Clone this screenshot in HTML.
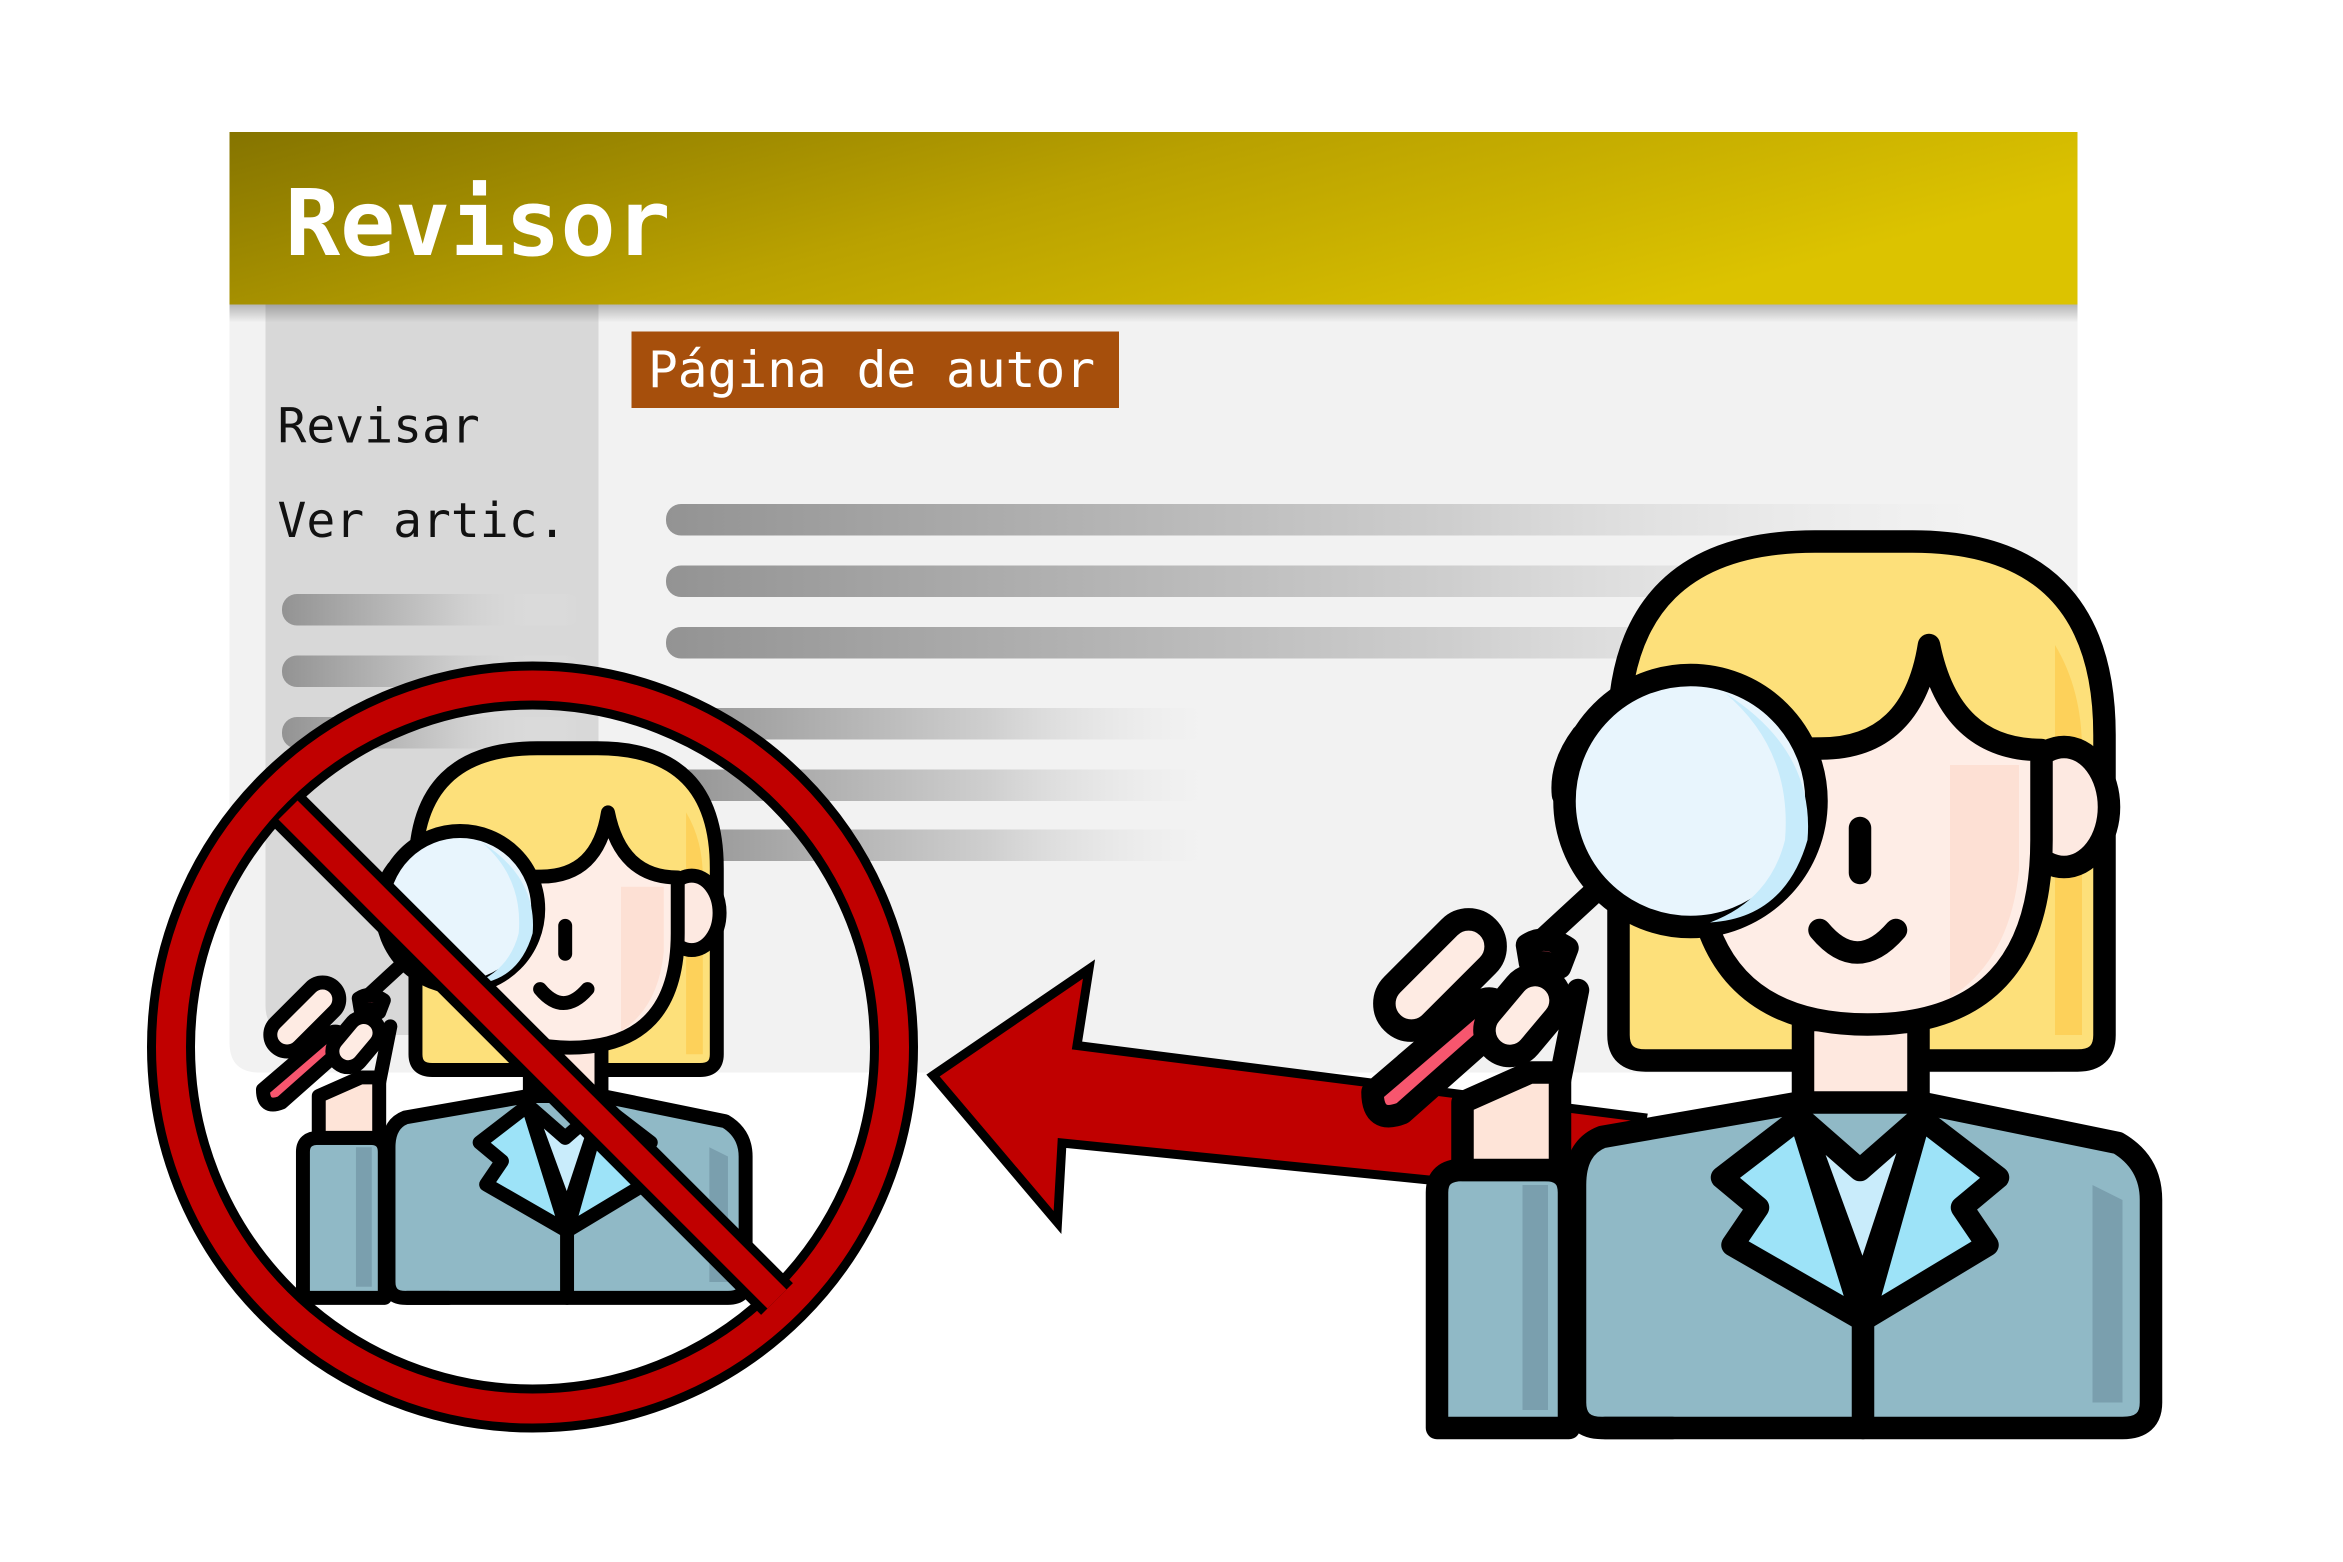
<!DOCTYPE html>
<html><head><meta charset="utf-8"><style>html,body{margin:0;padding:0;background:#fff}svg{display:block}</style></head>
<body>
<svg width="2343" height="1562" viewBox="0 0 1562 1041.333" xmlns="http://www.w3.org/2000/svg">
<defs>
<linearGradient id="hd" x1="0" y1="0" x2="1" y2="0.35">
<stop offset="0" stop-color="#857400"/><stop offset="0.5" stop-color="#b9a100"/><stop offset="1" stop-color="#dcc300"/></linearGradient>
<linearGradient id="bar" x1="0" y1="0" x2="1" y2="0">
<stop offset="0" stop-color="#939393"/><stop offset="0.6" stop-color="#cfcfcf"/><stop offset="1" stop-color="#e6e6e6" stop-opacity="0"/></linearGradient>
<linearGradient id="sh" x1="0" y1="0" x2="0" y2="1"><stop offset="0" stop-color="#000" stop-opacity="0.25"/><stop offset="1" stop-color="#000" stop-opacity="0"/></linearGradient>
<g id="woman" stroke="#000" stroke-width="15" stroke-linejoin="round" stroke-linecap="round">
  <path d="M1079,690 L1079,490 Q1079,361 1210,361 L1275,361 Q1403,361 1403,490 L1403,690 Q1403,707 1385,707 L1097,707 Q1079,707 1079,690 Z" fill="#fde07a"/>
  <path d="M1370,430 Q1388,460 1388,500 L1388,690 L1370,690 Z" fill="#fdd15a" stroke="none"/>
  <rect x="1202" y="680" width="77" height="65" fill="#fee8df"/>
  <ellipse cx="1376" cy="538" rx="30" ry="40" fill="#fde9e1"/>
  <path d="M1130,500 L1130,560 Q1130,683 1245,683 Q1361,683 1361,560 L1361,500 Q1300,500 1286,430 Q1275,499 1214,499 Z" fill="#feede6"/>
  <path d="M1330,510 L1346,510 L1346,580 Q1340,640 1300,665 L1300,510 Z" fill="#fde0d4" stroke="none"/>
  <line x1="1240" y1="552" x2="1240" y2="582"/>
  <path d="M1213,620 Q1238,650 1264,620" fill="none"/>
  <path d="M1068,758 L1200,735 L1280,735 L1412,762 Q1434,775 1434,800 L1434,935 Q1434,952 1415,952 L1068,952 Q1050,952 1050,935 L1050,790 Q1050,765 1068,758 Z" fill="#90b9c6"/>
  <path d="M1395,790 L1415,800 L1415,935 L1395,935 Z" fill="#7a9fae" stroke="none"/>
  <path d="M958,952 L958,795 Q958,780 975,780 L1030,780 Q1046,780 1046,795 L1046,952 Z" fill="#90b9c6"/>
  <path d="M1015,790 L1032,790 L1032,940 L1015,940 Z" fill="#7a9fae" stroke="none"/>
  <line x1="1070" y1="952" x2="1115" y2="952"/>
  <path d="M1200,745 L1240,780 L1280,745 L1242,860 Z" fill="#c9ecfb"/>
  <path d="M1200,745 L1148,785 L1172,805 L1155,830 L1242,880 Z" fill="#9de3f8"/>
  <path d="M1280,745 L1332,785 L1308,805 L1325,830 L1242,880 Z" fill="#9de3f8"/>
  <line x1="1242" y1="880" x2="1242" y2="952"/>
  <path d="M975,780 L975,735 L1020,715 L1040,715 L1040,780 Z" fill="#fee4d8"/>
  <path d="M1040,720 L1052,660" fill="none"/>
  <line x1="1030" y1="625" x2="1068" y2="590"/>
  <path d="M915,728 L985,668 Q1000,660 1005,680 L935,742 Q915,750 915,728 Z" fill="#f7566e"/>
  <rect x="915" y="632" width="90" height="36" rx="18" transform="rotate(-45 960 650)" fill="#feebe3"/>
  <rect x="985" y="660" width="60" height="34" rx="17" transform="rotate(-50 1015 677)" fill="#feebe3"/>
  <path d="M1018,630 Q1030,622 1045,632 L1040,645 Q1030,640 1020,642 Z" fill="#f7566e"/>
  <circle cx="1127" cy="534" r="84" fill="#e8f5fd"/>
  <path d="M1150,462 Q1195,500 1190,560 Q1180,600 1140,615 Q1190,612 1205,560 Q1210,500 1150,462 Z" fill="#c7ebfb" stroke="none"/>
  <path d="M1055,490 Q1040,510 1042,530" fill="none"/>
</g>
</defs>
<rect width="1562" height="1042" fill="#fff"/>
<path d="M153,203 L1385,203 L1385,695 Q1385,715 1365,715 L173,715 Q153,715 153,695 Z" fill="#f2f2f2"/>
<path d="M177,203 L399,203 L399,690 L197,690 Q177,690 177,670 Z" fill="#d8d8d8"/>
<rect x="153" y="203" width="1232" height="12" fill="url(#sh)"/>
<rect x="153" y="88" width="1232" height="115" fill="url(#hd)"/>
<text x="190" y="170" font-family="'DejaVu Sans Mono','Liberation Mono',monospace" font-weight="bold" font-size="61" fill="#fff">Revisor</text>
<rect x="421" y="221" width="325" height="51" fill="#a64f0c"/>
<text x="432" y="258" font-family="'DejaVu Sans Mono','Liberation Mono',monospace" font-size="33" fill="#fff">Página de autor</text>
<text x="185" y="295" font-family="'DejaVu Sans Mono','Liberation Mono',monospace" font-size="32" fill="#111">Revisar</text>
<text x="185" y="358" font-family="'DejaVu Sans Mono','Liberation Mono',monospace" font-size="32" fill="#111">Ver artic.</text>
<g fill="url(#bar)">
<rect x="444" y="336" width="880" height="21" rx="10"/>
<rect x="444" y="377" width="880" height="21" rx="10"/>
<rect x="444" y="418" width="880" height="21" rx="10"/>
<rect x="444" y="472" width="360" height="21" rx="10"/>
<rect x="444" y="513" width="360" height="21" rx="10"/>
<rect x="444" y="553" width="360" height="21" rx="10"/>
<rect x="188" y="396" width="200" height="21" rx="10"/>
<rect x="188" y="437" width="200" height="21" rx="10"/>
<rect x="188" y="478" width="200" height="21" rx="10"/>
</g>
<polygon points="622,717 726,646 718,697 1095,745 1085,800 708,762 705,815" fill="#c00000" stroke="#000" stroke-width="6" stroke-linejoin="miter"/>
<use href="#woman"/>
<g transform="translate(-392,275) scale(0.62)"><use href="#woman"/></g>
<circle cx="355" cy="698" r="241" fill="none" stroke="#000" stroke-width="32"/>
<circle cx="355" cy="698" r="241" fill="none" stroke="#c00000" stroke-width="20"/>
<line x1="192" y1="540" x2="518" y2="866" stroke="#000" stroke-width="30"/>
<line x1="192" y1="540" x2="518" y2="866" stroke="#c00000" stroke-width="18"/>
</svg>
</body></html>
